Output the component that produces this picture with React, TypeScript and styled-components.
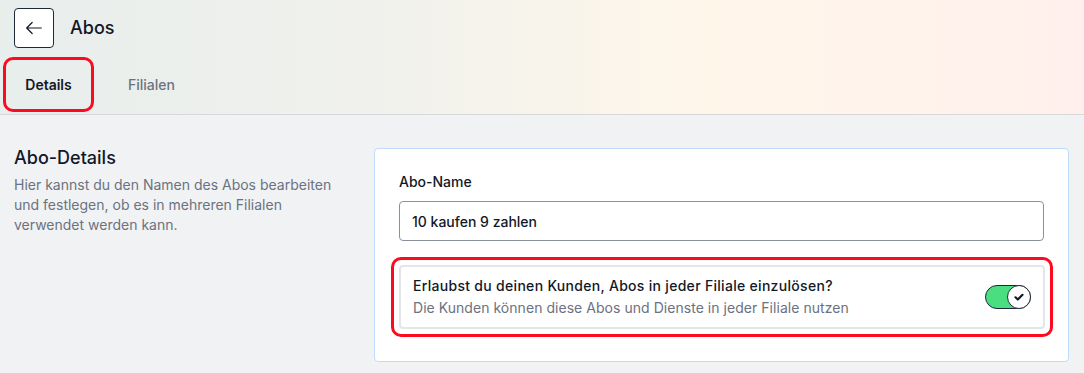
import {FunctionComponent, useState} from "react";
import styled, {createGlobalStyle} from "styled-components";

const GlobalStyle = createGlobalStyle`
  body {
    margin: 0;
    background: #f1f2f4;
    font-family: Inter, "Noto Sans", sans-serif;
    color: #111827;
  }
`;

const Header = styled.header`
  height: 114px;
  border-bottom: 1px solid #d6d8dc;
  background: linear-gradient(90deg, #e8eeec 0%, #f0f1ec 35%, #fff6ea 65%, #fff0ed 100%);
  display: flex;
  flex-direction: column;
`;

const TopRow = styled.div`
  display: flex;
  align-items: center;
  gap: 16px;
  padding: 8px 14px 0;
  height: 40px;
`;

const BackButton = styled.button`
  width: 40px;
  height: 40px;
  box-sizing: border-box;
  border: 1px solid #1f2937;
  border-radius: 4px;
  background: #fff;
  display: flex;
  align-items: center;
  justify-content: center;
  padding: 0;
  cursor: pointer;
`;

const Title = styled.h1`
  margin: 0;
  font-size: 18px;
  font-weight: 500;
  line-height: 28px;
`;

const TabRow = styled.nav`
  display: flex;
  align-items: center;
  padding: 9px 0 0 3px;
`;

const Highlight = styled.div<{$radius?: number}>`
  border: 3px solid #fb0a20;
  border-radius: ${p => p.$radius ?? 10}px;
  box-sizing: border-box;
`;

const TabBox = styled(Highlight)`
  width: 91px;
  height: 55px;
  display: flex;
  align-items: center;
  justify-content: center;
`;

const Tab = styled.button<{$active?: boolean}>`
  border: none;
  background: none;
  padding: 0;
  font-family: inherit;
  font-size: 14px;
  font-weight: ${p => (p.$active ? 600 : 500)};
  color: ${p => (p.$active ? "#111827" : "#6b7280")};
  cursor: pointer;
`;

const PlainTab = styled.div`
  display: flex;
  padding-left: 34px;
`;

const Body = styled.main`
  display: grid;
  grid-template-columns: 340px 1fr;
  gap: 20px;
  padding: 33px 15px 0 14px;
`;

const SectionTitle = styled.h2`
  margin: 0 0 7px;
  font-size: 18px;
  font-weight: 500;
  line-height: 20px;
`;

const SectionText = styled.p`
  margin: 0;
  font-size: 14px;
  line-height: 20px;
  color: #6b7280;
`;

const Card = styled.section`
  background: #fff;
  border: 1px solid #bfdbfe;
  border-radius: 4px;
  padding: 23px 24px 24px;
  display: flex;
  flex-direction: column;
`;

const Label = styled.label`
  font-size: 14px;
  font-weight: 500;
  line-height: 20px;
  margin-bottom: 9px;
`;

const Input = styled.input`
  height: 40px;
  box-sizing: border-box;
  border: 1px solid #8b919c;
  border-radius: 4px;
  padding: 0 12px;
  font-family: inherit;
  font-size: 14px;
  font-weight: 500;
  color: #111827;
  outline: none;
`;

const OptionFrame = styled(Highlight)`
  margin: 16px -9px 0 -8px;
  padding: 5px;
`;

const OptionBox = styled.div`
  border: 2px solid #e3e5ea;
  border-radius: 4px;
  padding: 9px 12px 9px 12px;
  display: flex;
  align-items: center;
  justify-content: space-between;
`;

const OptionTitle = styled.div`
  font-size: 14px;
  font-weight: 500;
  line-height: 20px;
  letter-spacing: 0.3px;
`;

const OptionText = styled.div`
  font-size: 14px;
  line-height: 20px;
  color: #6b7280;
  margin-top: 2px;
  letter-spacing: 0.04px;
`;

const Track = styled.button<{$on: boolean}>`
  position: relative;
  width: 46px;
  height: 24px;
  box-sizing: border-box;
  border: 1px solid #1f2937;
  border-radius: 12px;
  background: ${p => (p.$on ? "#4ade80" : "#e5e7eb")};
  padding: 0;
  cursor: pointer;
`;

const Knob = styled.span<{$on: boolean}>`
  position: absolute;
  top: -1px;
  left: ${p => (p.$on ? "21px" : "-1px")};
  width: 24px;
  height: 24px;
  box-sizing: border-box;
  border: 1px solid #1f2937;
  border-radius: 50%;
  background: #fff;
  display: flex;
  align-items: center;
  justify-content: center;
`;

const App: FunctionComponent = () => {
    const [name, setName] = useState('10 kaufen 9 zahlen');
    const [allStores, setAllStores] = useState(true);

    return (
        <>
            <GlobalStyle/>
            <Header>
                <TopRow>
                    <BackButton aria-label="Zurück">
                        <svg width="22" height="22" viewBox="0 0 24 24" fill="none" stroke="#111827" strokeWidth="1.3" strokeLinecap="round" strokeLinejoin="round">
                            <path d="M20 12H4M10 6l-6 6 6 6"/>
                        </svg>
                    </BackButton>
                    <Title>Abos</Title>
                </TopRow>
                <TabRow>
                    <TabBox>
                        <Tab $active>Details</Tab>
                    </TabBox>
                    <PlainTab>
                        <Tab>Filialen</Tab>
                    </PlainTab>
                </TabRow>
            </Header>
            <Body>
                <div>
                    <SectionTitle>Abo-Details</SectionTitle>
                    <SectionText>
                        Hier kannst du den Namen des Abos bearbeiten und festlegen, ob es in mehreren Filialen verwendet werden kann.
                    </SectionText>
                </div>
                <Card>
                    <Label htmlFor="abo-name">Abo-Name</Label>
                    <Input id="abo-name" value={name} onChange={e => setName(e.target.value)}/>
                    <OptionFrame>
                        <OptionBox>
                            <div>
                                <OptionTitle>Erlaubst du deinen Kunden, Abos in jeder Filiale einzulösen?</OptionTitle>
                                <OptionText>Die Kunden können diese Abos und Dienste in jeder Filiale nutzen</OptionText>
                            </div>
                            <Track $on={allStores} onClick={() => setAllStores(!allStores)} aria-label="Filialen">
                                <Knob $on={allStores}>
                                    {allStores && (
                                        <svg width="12" height="12" viewBox="0 0 12 12" fill="none" stroke="#111827" strokeWidth="2.2" strokeLinecap="round" strokeLinejoin="round">
                                            <path d="M2.5 6.3l2.3 2.2L9.5 3.8"/>
                                        </svg>
                                    )}
                                </Knob>
                            </Track>
                        </OptionBox>
                    </OptionFrame>
                </Card>
            </Body>
        </>
    );
};

export default App;
